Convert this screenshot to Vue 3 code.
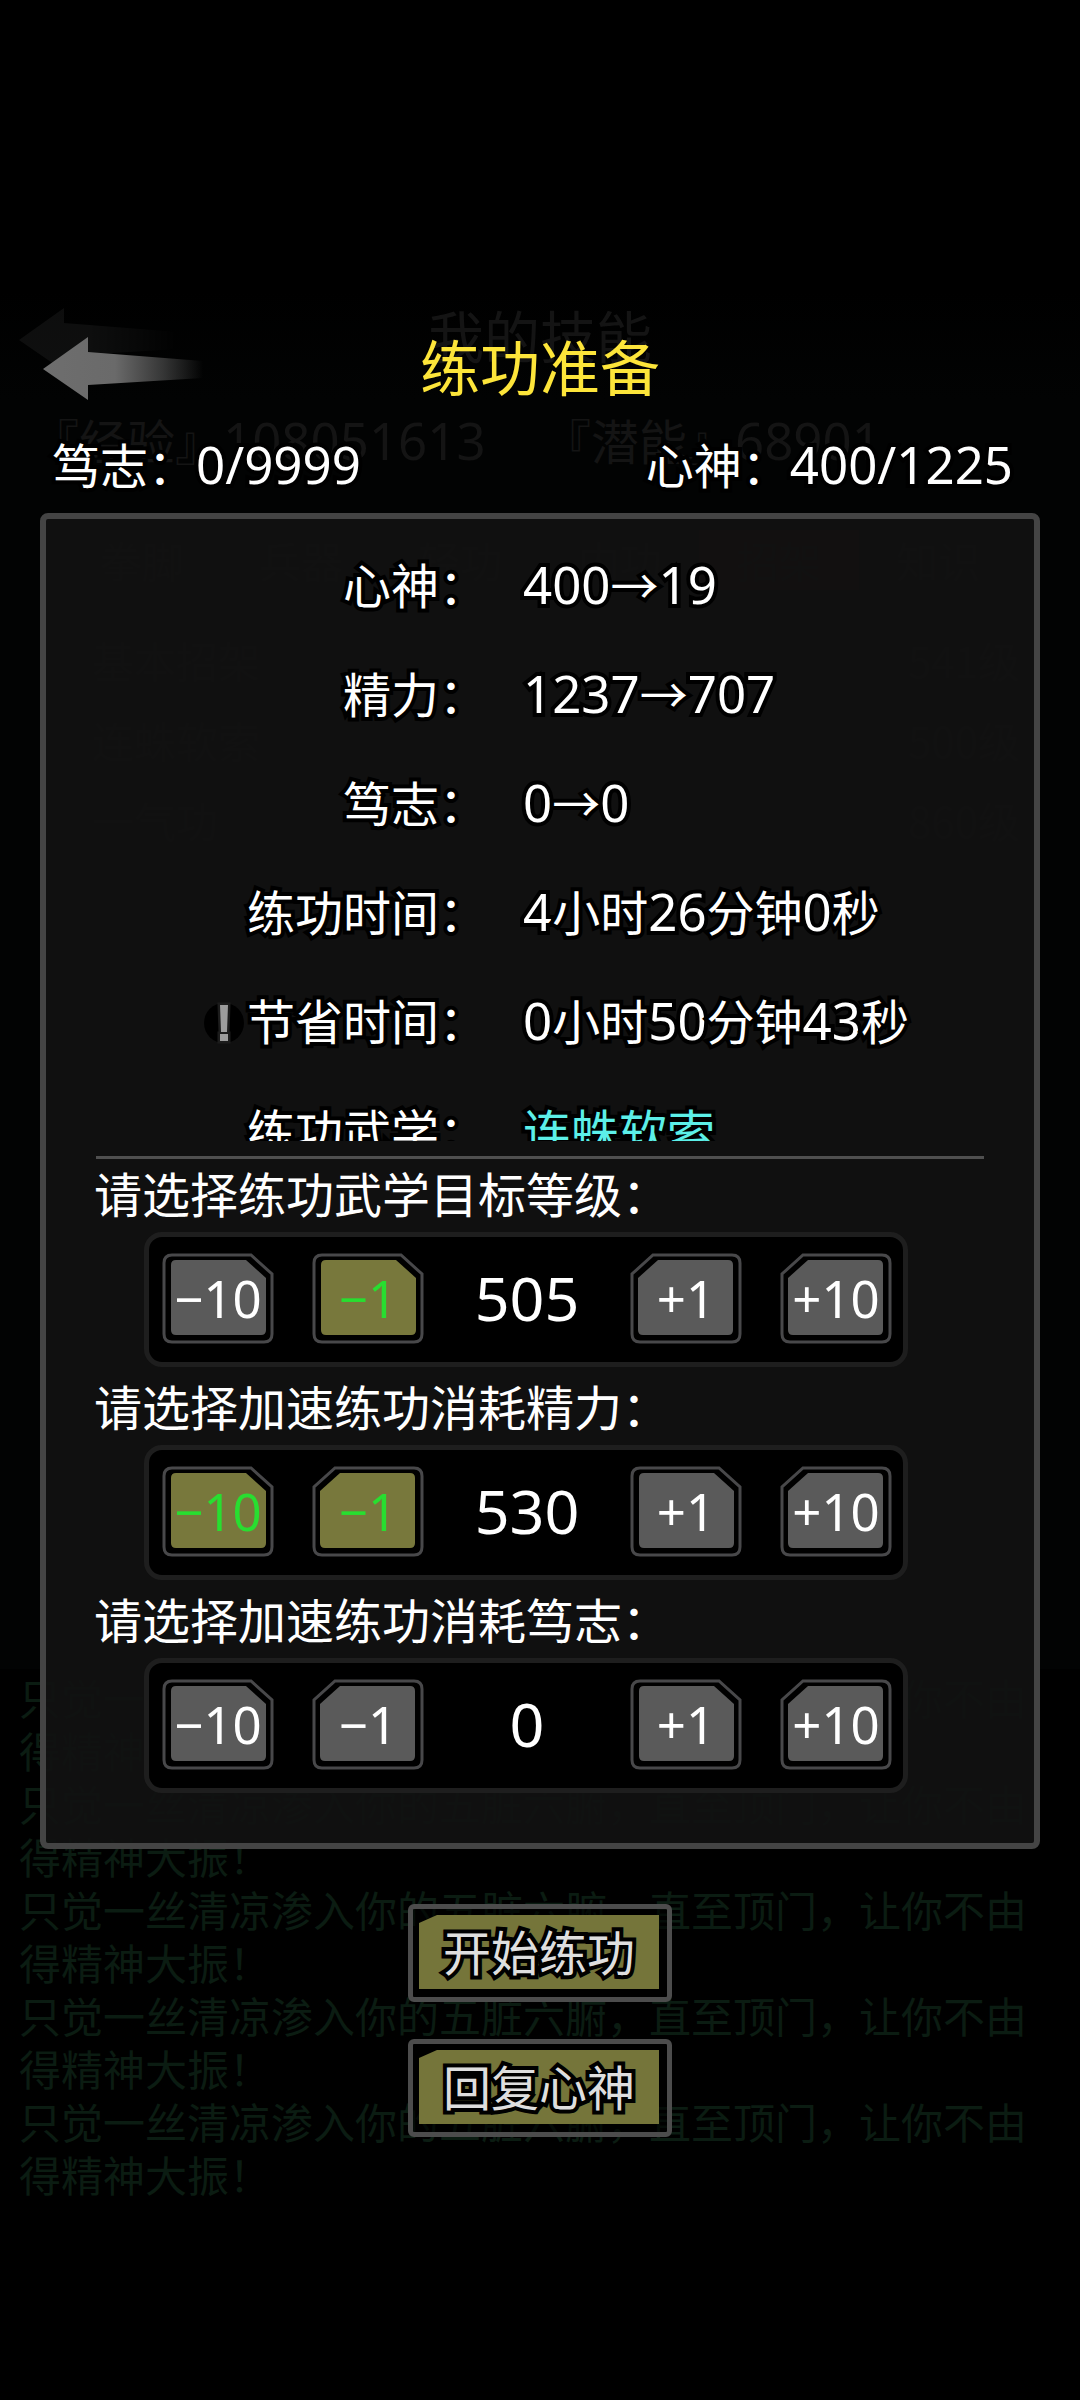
<script setup>
import { reactive } from 'vue'

// Splits a string so that Latin runs can carry their own face and size.
const runs = (text) =>
  text.split(/([0-9/]+)/).filter(Boolean).map((t) => ({ t, latin: /^[0-9/]+$/.test(t) }))

const tabs = ['拳脚', '兵器', '轻功', '内功', '招架', '知识']
const skills = [
  ['基本招架', '541级'],
  ['连蛛软索', '500级'],
  ['一气功', '860级'],
]
const logLine = '只觉一丝清凉渗入你的五脏六腑，直至顶门，让你不由得精神大振！'

const stats = [
  { label: '笃志：', value: '0/9999' },
  { label: '心神：', value: '400/1225' },
]

const rows = [
  { label: '心神：', value: '400→19' },
  { label: '精力：', value: '1237→707' },
  { label: '笃志：', value: '0→0' },
  { label: '练功时间：', value: '4小时26分钟0秒' },
  { label: '节省时间：', value: '0小时50分钟43秒', hint: true },
  { label: '练功武学：', value: '连蛛软索', link: true },
]

const pickers = reactive([
  {
    label: '请选择练功武学目标等级：',
    value: 505,
    steps: [
      { by: -10, text: '−10', cut: 'right' },
      { by: -1, text: '−1', cut: 'right', on: true },
      { by: 1, text: '+1', cut: 'left' },
      { by: 10, text: '+10', cut: 'left' },
    ],
  },
  {
    label: '请选择加速练功消耗精力：',
    value: 530,
    steps: [
      { by: -10, text: '−10', cut: 'right', on: true },
      { by: -1, text: '−1', cut: 'left', on: true },
      { by: 1, text: '+1', cut: 'right' },
      { by: 10, text: '+10', cut: 'left' },
    ],
  },
  {
    label: '请选择加速练功消耗笃志：',
    value: 0,
    steps: [
      { by: -10, text: '−10', cut: 'right' },
      { by: -1, text: '−1', cut: 'left' },
      { by: 1, text: '+1', cut: 'right' },
      { by: 10, text: '+10', cut: 'left' },
    ],
  },
])

const change = (picker, by) => {
  picker.value = Math.max(0, picker.value + by)
}
</script>

<template>
  <div class="screen">
    <div class="backdrop" aria-hidden="true">
      <div class="back-head">
        <svg class="back-arrow" viewBox="0 0 160 64">
          <path d="M0 32 45 0V15L160 24V41L45 48V63Z" fill="url(#fade)" />
        </svg>
        <span class="back-title">我的技能</span>
      </div>
      <div class="back-stats">
        <span>『经验』<span class="num">108051613</span></span>
        <span>『潜能』<span class="num">68901</span></span>
      </div>
      <div class="back-tabs">
        <span v-for="t in tabs" :key="t" :class="{ current: t === '招架' }">{{ t }}</span>
      </div>
      <div class="back-skills">
        <div v-for="s in skills" :key="s[0]"><span>{{ s[0] }}</span><span>{{ s[1] }}</span></div>
      </div>
      <div class="log">
        <p v-for="n in 5" :key="n">{{ logLine }}</p>
      </div>
    </div>

    <main class="dialog">
      <header class="head">
        <button class="back" type="button" aria-label="返回">
          <svg viewBox="0 0 160 64">
            <defs>
              <linearGradient id="fade" x1="0" x2="1" y1="0" y2="0">
                <stop offset="0" stop-color="#6e6e6e" />
                <stop offset="0.45" stop-color="#6a6a6a" />
                <stop offset="0.75" stop-color="#6a6a6a" stop-opacity="0.5" />
                <stop offset="1" stop-color="#6a6a6a" stop-opacity="0" />
              </linearGradient>
            </defs>
            <path d="M0 32 45 0V15L160 24V41L45 48V63Z" fill="url(#fade)" />
          </svg>
        </button>
        <h1>练功准备</h1>
      </header>

      <div class="stats">
        <span v-for="s in stats" :key="s.label" class="outlined">
          {{ s.label }}<span class="num">{{ s.value }}</span>
        </span>
      </div>

      <section class="panel">
        <div class="details">
          <div v-for="r in rows" :key="r.label" class="detail outlined">
            <span class="label">
              <button v-if="r.hint" class="hint" type="button" aria-label="说明">
                <svg viewBox="0 0 42 42">
                  <circle cx="21" cy="21" r="20" fill="#000" />
                  <path
                    d="M17 3H25L24 30H18ZM17 32H25V39H17Z"
                    fill="#9c9c9c"
                    stroke="#1c1c1c"
                    stroke-width="5"
                    paint-order="stroke"
                  />
                </svg>
              </button>{{ r.label }}
            </span>
            <a v-if="r.link" class="value link" href="#">{{ r.value }}</a>
            <span v-else class="value">
              <span v-for="(p, i) in runs(r.value)" :key="i" :class="{ num: p.latin }">{{ p.t }}</span>
            </span>
          </div>
        </div>

        <div class="pickers">
          <div v-for="p in pickers" :key="p.label" class="picker">
            <h2>{{ p.label }}</h2>
            <div class="stepper" role="group" :aria-label="p.label">
              <template v-for="(s, i) in p.steps" :key="s.text">
                <output v-if="i === 2" class="num amount">{{ p.value }}</output>
                <button
                  type="button"
                  class="step num"
                  :class="[s.cut, { on: s.on }]"
                  @click="change(p, s.by)"
                >
                  <svg viewBox="0 0 112 91" aria-hidden="true">
                    <path
                      class="frame"
                      d="M10 2H89L110 21V81Q110 89 102 89H10Q2 89 2 81V10Q2 2 10 2Z"
                    />
                    <path
                      class="face"
                      d="M14 7H84L104 25V77Q104 82 99 82H14Q9 82 9 77V12Q9 7 14 7Z"
                    />
                  </svg>
                  <span>{{ s.text }}</span>
                </button>
              </template>
            </div>
          </div>
        </div>
      </section>

      <footer class="actions">
        <button type="button" class="action"><span class="outlined">开始练功</span></button>
        <button type="button" class="action"><span class="outlined">回复心神</span></button>
      </footer>
    </main>
  </div>
</template>

<style>
body {
  background: #000;
}
</style>

<style scoped>
.screen {
  position: relative;
  min-height: 100vh;
  overflow: hidden;
  background: #000;
  color: #fff;
  font-family: 'Noto Sans CJK SC', sans-serif;
  font-size: 48px;
  line-height: 60px;
}

button {
  margin: 0;
  padding: 0;
  border: 0;
  background: none;
  color: inherit;
  font: inherit;
  cursor: pointer;
}

svg {
  display: block;
}

.num {
  font-family: 'Noto Sans', 'Noto Sans CJK SC', sans-serif;
  font-size: 51px;
}

.outlined {
  -webkit-text-stroke: 8px #000;
  paint-order: stroke fill;
}

/* Dimmed skill screen under the dialog */
.backdrop {
  position: absolute;
  inset: 0;
  padding-top: 284px;
  background: linear-gradient(#000 290px, #020303 400px, #020303 1669px, #000 1669px);
  color: #141414;
}

.back-head {
  display: flex;
  height: 100px;
  align-items: center;
  justify-content: center;
}

.back-arrow {
  position: absolute;
  top: 308px;
  left: 19px;
  width: 160px;
  height: 64px;
  opacity: 0.12;
}

.back-title {
  font-size: 56px;
}

.back-stats {
  display: grid;
  grid-template-columns: 512px 1fr;
  height: 106px;
  padding: 25px 31px;
  box-sizing: border-box;
}

.back-tabs {
  display: grid;
  grid-template-columns: repeat(6, 1fr);
  margin: 40px 62px 0;
  text-align: center;
  font-size: 42px;
}

.back-tabs .current {
  background: #1c0606;
}

.back-skills {
  margin: 30px 60px 0 92px;
  font-size: 42px;
}

.back-skills div {
  display: flex;
  height: 80px;
  justify-content: space-between;
  align-items: center;
}

.log {
  position: absolute;
  top: 1670px;
  left: 19px;
  right: 19px;
  color: #0b1c12;
  font-size: 42px;
  line-height: 53px;
}

.log p {
  width: 1010px;
  margin: 0;
}

/* Dialog */
.dialog {
  position: relative;
  padding: 326px 40px 40px;
}

.head {
  display: flex;
  height: 78px;
  align-items: center;
  justify-content: center;
}

.head h1 {
  margin: 0;
  color: #fde53a;
  font-size: 60px;
  font-weight: 400;
}

.back {
  position: absolute;
  top: 337px;
  left: 43px;
  width: 160px;
  height: 64px;
}

.stats {
  display: flex;
  justify-content: space-between;
  height: 109px;
  padding: 29px 27px 0 12px;
  box-sizing: border-box;
}

.panel {
  padding: 10px 50px 50px;
  border: 6px solid #444;
  border-radius: 8px;
  background: rgba(17, 17, 17, 0.92);
}

.details {
  height: 612px;
  overflow: hidden;
}

.detail {
  display: grid;
  grid-template-columns: 391px 1fr;
  column-gap: 36px;
  height: 109px;
  align-items: baseline;
  align-content: center;
}

.label {
  text-align: right;
  white-space: nowrap;
}

.hint {
  display: inline-block;
  width: 42px;
  height: 42px;
  margin-right: 2px;
  vertical-align: -4px;
}

.link {
  color: #5cefe8;
  text-decoration: none;
}

.pickers {
  display: flex;
  flex-direction: column;
  gap: 8px;
  margin-top: 15px;
  padding-top: 3px;
  border-top: 3px solid #4f4f4f;
}

.picker h2 {
  margin: 0 0 10px -2px;
  font-size: 48px;
  font-weight: 400;
  line-height: 60px;
}

.stepper {
  display: flex;
  gap: 38px;
  align-items: center;
  height: 135px;
  margin: 0 76px 0 48px;
  padding: 0 11px 3px 13px;
  box-sizing: border-box;
  border: 5px solid #1e1e1e;
  border-radius: 18px;
  background: #000;
}

.amount {
  flex: 1;
  font-size: 61px;
  text-align: center;
}

.step {
  position: relative;
  width: 112px;
  height: 91px;
}

.step svg {
  position: absolute;
  inset: 0;
}

.step span {
  position: relative;
}

.left svg {
  transform: scaleX(-1);
}

.frame {
  fill: none;
  stroke: #48484a;
  stroke-width: 3;
}

.face {
  fill: #5a5a5a;
}

.on {
  color: #28de30;
}

.on .face {
  fill: #78783c;
}

.actions {
  display: flex;
  flex-direction: column;
  align-items: center;
  gap: 37px;
  margin-top: 55px;
}

.action {
  width: 264px;
  height: 98px;
  padding: 6px 8px 8px 6px;
  box-sizing: border-box;
  border: 5px solid #4c4c4c;
  border-radius: 6px;
  background: rgba(0, 0, 0, 0.6);
  color: #dedede;
}

.action span {
  display: block;
  height: 74px;
  background: rgba(122, 122, 60, 0.96);
  clip-path: polygon(18px 0, 100% 0, 100% 100%, 0 100%, 0 8px);
  line-height: 70px;
}
</style>
